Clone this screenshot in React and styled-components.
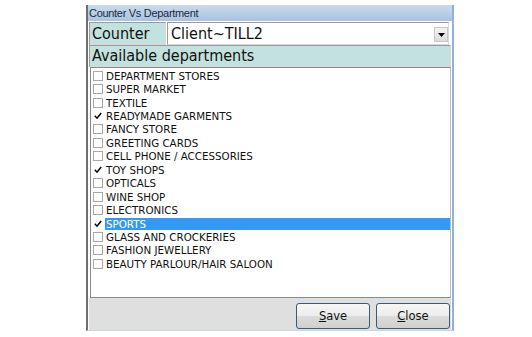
import React from "react";
import styled, { createGlobalStyle } from "styled-components";

const GlobalStyle = createGlobalStyle`
  html, body {
    margin: 0;
    padding: 0;
    background: #ffffff;
  }
`;

const Page = styled.div`
  padding: 5px 0 0 86px;
  width: 532px;
  height: 337px;
  box-sizing: border-box;
  font-family: "DejaVu Sans", Verdana, sans-serif;
`;

const Dialog = styled.div`
  width: 368px;
  height: 326px;
  box-sizing: border-box;
  border-left: 2px solid #6f6f6f;
  border-right: 2px solid #8fb2d6;
  border-bottom: 1px solid #c6d6e6;
  background: #dfdfdf;
  display: flex;
  flex-direction: column;
`;

const TitleBar = styled.div`
  height: 16px;
  flex: none;
  background: linear-gradient(to bottom, #c9dbee, #a9c3e0);
  font-family: "Liberation Sans", Arial, sans-serif;
  font-size: 11px;
  letter-spacing: -0.3px;
  color: #1b2a3c;
  line-height: 17px;
  padding-left: 1px;
  white-space: nowrap;
`;

const Body = styled.div`
  flex: 1;
  display: flex;
  flex-direction: column;
  padding: 1px 1px 0 1px;
  background: #ffffff;
`;

const CounterRow = styled.div`
  display: flex;
  height: 23px;
  flex: none;
`;

const LabelCell = styled.div`
  width: ${(p) => p.width || "auto"};
  flex: none;
  height: ${(p) => p.height || "23px"};
  box-sizing: border-box;
  background: #c3e1de;
  border: 1px solid #9a9a9a;
  border-right-color: #d8d8d8;
  border-bottom-color: #d8d8d8;
  font-family: "DejaVu Sans Condensed", "DejaVu Sans", sans-serif;
  font-size: 16px;
  line-height: ${(p) => (p.height ? `${parseInt(p.height) - 2}px` : "21px")};
  padding-left: 2px;
  color: #111;
  white-space: nowrap;
`;

const Combo = styled.div`
  flex: 1;
  margin-left: 1px;
  margin-right: 2px;
  box-sizing: border-box;
  border: 1px solid #9a9a9a;
  border-right-color: #d8d8d8;
  border-bottom-color: #d8d8d8;
  background: #fff;
  display: flex;
  align-items: center;
  padding-left: 3px;
  font-family: "DejaVu Sans Condensed", "DejaVu Sans", sans-serif;
  font-size: 16px;
  color: #111;
`;

const ComboText = styled.span`
  flex: 1;
  white-space: nowrap;
`;

const DropButton = styled.div`
  width: 14px;
  height: 15px;
  margin-top: 2px;
  box-sizing: border-box;
  background: linear-gradient(to bottom, #f4f4f4, #dcdcdc);
  border: 1px solid #c8c8c8;
  display: flex;
  align-items: center;
  justify-content: center;
`;

const ListBox = styled.div`
  margin-left: 1px;
  width: 361px;
  height: 231px;
  flex: none;
  box-sizing: border-box;
  border: 1px solid #8a8a8a;
  border-right-color: #bdbdbd;
  background: #fff;
  padding-top: 1px;
`;

const Item = styled.div`
  display: flex;
  align-items: center;
  height: 13.45px;
  padding-left: 2px;
`;

const Box = styled.span`
  width: 10px;
  height: 10px;
  box-sizing: border-box;
  border: 1px solid ${(p) => (p.checked ? "#ffffff" : "#a8a8a8")};
  background: #fff;
  flex: none;
  display: flex;
  align-items: center;
  justify-content: center;
`;

const ItemText = styled.span`
  flex: 1;
  margin-left: 2px;
  padding-left: 1px;
  height: 12px;
  line-height: 12px;
  font-size: 10.3px;
  color: ${(p) => (p.selected ? "#ffffff" : "#111")};
  background: ${(p) => (p.selected ? "#3399f5" : "transparent")};
  white-space: nowrap;
`;

const Footer = styled.div`
  flex: 1;
  background: #dfdfdf;
  display: flex;
  justify-content: flex-end;
  align-items: flex-start;
  gap: 6px;
  padding: 5px 1px 0 0;
  box-sizing: border-box;
`;

const Button = styled.button`
  width: 74px;
  height: 26px;
  border: 1px solid #3c5a78;
  border-radius: 3px;
  background: linear-gradient(to bottom, #f6f6f6 0%, #ececec 50%, #dcdcdc 51%, #d0d0d0 100%);
  font-family: "DejaVu Sans", Verdana, sans-serif;
  font-size: 11.5px;
  color: #111;
  padding: 0;
  cursor: pointer;
  & u {
    text-decoration: underline;
  }
`;

const departments = [
  { name: "DEPARTMENT STORES" },
  { name: "SUPER MARKET" },
  { name: "TEXTILE" },
  { name: "READYMADE GARMENTS", checked: true },
  { name: "FANCY STORE" },
  { name: "GREETING CARDS" },
  { name: "CELL PHONE / ACCESSORIES" },
  { name: "TOY SHOPS", checked: true },
  { name: "OPTICALS" },
  { name: "WINE SHOP" },
  { name: "ELECTRONICS" },
  { name: "SPORTS", checked: true, selected: true },
  { name: "GLASS AND CROCKERIES" },
  { name: "FASHION JEWELLERY" },
  { name: "BEAUTY PARLOUR/HAIR SALOON" },
];

function Check() {
  return (
    <svg width="8" height="8" viewBox="0 0 8 8">
      <path d="M0.8 3.8 L3 6.2 L7.2 1" fill="none" stroke="#000" strokeWidth="1.5" />
    </svg>
  );
}

function App() {
  return (
    <Page>
      <GlobalStyle />
      <Dialog>
        <TitleBar>Counter Vs Department</TitleBar>
        <Body>
          <CounterRow>
            <LabelCell width="77px">Counter</LabelCell>
            <Combo>
              <ComboText>Client~TILL2</ComboText>
              <DropButton>
                <svg width="7" height="4" viewBox="0 0 7 4">
                  <path d="M0 0 H7 L3.5 4 Z" fill="#000" />
                </svg>
              </DropButton>
            </Combo>
          </CounterRow>
          <LabelCell height="22px">Available departments</LabelCell>
          <ListBox>
            {departments.map((d) => (
              <Item key={d.name}>
                <Box checked={d.checked}>{d.checked && <Check />}</Box>
                <ItemText selected={d.selected}>{d.name}</ItemText>
              </Item>
            ))}
          </ListBox>
          <Footer>
            <Button>
              <u>S</u>ave
            </Button>
            <Button>
              <u>C</u>lose
            </Button>
          </Footer>
        </Body>
      </Dialog>
    </Page>
  );
}

export default App;
